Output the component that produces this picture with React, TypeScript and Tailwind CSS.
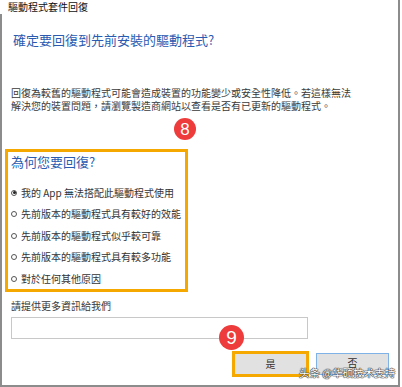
import { useState } from 'react';

const reasons = [
  '我的 App 無法搭配此驅動程式使用',
  '先前版本的驅動程式具有較好的效能',
  '先前版本的驅動程式似乎較可靠',
  '先前版本的驅動程式具有較多功能',
  '對於任何其他原因',
];

export default function App() {
  const [selected, setSelected] = useState(0);
  const [note, setNote] = useState('');

  return (
    <div
      className="relative w-[402px] h-[387px] bg-white overflow-hidden"
      style={{ fontFamily: '"Noto Sans CJK TC", "Noto Sans", sans-serif' }}
    >
      <div className="flex flex-col w-[400px] h-[387px] border-r-2 border-b-2 border-[#8c8c8c]">
        <div className="flex-none h-[14px] pl-[8px] text-[10px] leading-[14px] text-[#111]">驅動程式套件回復</div>

        <div className="flex-1 flex flex-col border-l-2 border-[#8c8c8c]">
          <h1 className="flex-none mt-[17px] pl-[11px] text-[13px] leading-[17px] text-[#2a5bb0]">
            確定要回復到先前安裝的驅動程式?
          </h1>

          <p className="flex-none mt-[38px] ml-[9px] w-[342px] text-[10px] leading-[13px] text-[#3a3a3a]">
            回復為較舊的驅動程式可能會造成裝置的功能變少或安全性降低。若這樣無法解決您的裝置問題，請瀏覽製造商網站以查看是否有已更新的驅動程式。
          </p>

          <div className="flex-none mt-[37px] ml-[3px] w-[183px] h-[143px] border-[3px] border-[#f5a800] pl-[3px] pt-[1px]">
            <h2 className="text-[13px] leading-[17px] text-[#2a5bb0]">為何您要回復?</h2>
            <div className="mt-[12px] flex flex-col">
              {reasons.map((r, i) => (
                <button
                  key={r}
                  onClick={() => setSelected(i)}
                  className="h-[21.5px] flex items-center gap-[4px] text-left text-[10px] leading-[12px] text-[#333]"
                >
                  <span className="w-[6px] h-[6px] rounded-full border border-[#555] flex items-center justify-center">
                    {selected === i && <span className="w-[3px] h-[3px] rounded-full bg-[#222]" />}
                  </span>
                  {r}
                </button>
              ))}
            </div>
          </div>

          <div className="flex-none mt-[7px] pl-[9px] text-[10px] leading-[13px] text-[#3a3a3a]">請提供更多資訊給我們</div>
          <input
            value={note}
            onChange={(e) => setNote(e.target.value)}
            className="flex-none block mt-[5px] ml-[9px] w-[297px] h-[22px] border border-[#c8c8c8] bg-white outline-none px-1 text-[10px] leading-[12px]"
          />

          <div className="flex-none h-[26px] mt-[12px] flex justify-end items-center gap-[7px] pr-[9px]">
            <button className="flex-none w-[77px] h-[26px] flex items-center justify-center border-[3px] border-[#f5a800] bg-[#e1e1e1] text-[10px] leading-[12px] text-[#333]">
              是
            </button>
            <button className="flex-none w-[73px] h-[22px] flex items-start justify-center pt-[3px] bg-[#e1e1e1] border border-[#7fb3e8] text-[10px] leading-[12px] text-[#333]">
              否
            </button>
          </div>
        </div>
      </div>

      <div className="absolute left-[174px] top-[118px] w-[22px] h-[22px] rounded-full bg-[#ee3b3b] flex items-center justify-center text-white text-[17px] leading-none"
        style={{ fontFamily: '"Liberation Sans", Arial, sans-serif' }}>
        8
      </div>
      <div className="absolute left-[219px] top-[325px] w-[25px] h-[25px] rounded-full bg-[#ee3b3b] flex items-center justify-center text-white text-[19px] leading-none"
        style={{ fontFamily: '"Liberation Sans", Arial, sans-serif' }}>
        9
      </div>

      <div
        className="absolute left-[299px] top-[366px] text-[10.5px] leading-[14px] text-white whitespace-nowrap"
        style={{
          fontFamily: '"Noto Sans CJK SC", sans-serif',
          textShadow: '0 0 1px #333, 0 0 1px #333, 0 0 1px #333, 0 0 1px #333',
        }}
      >
        头条 @华硕技术支持
      </div>
    </div>
  );
}
